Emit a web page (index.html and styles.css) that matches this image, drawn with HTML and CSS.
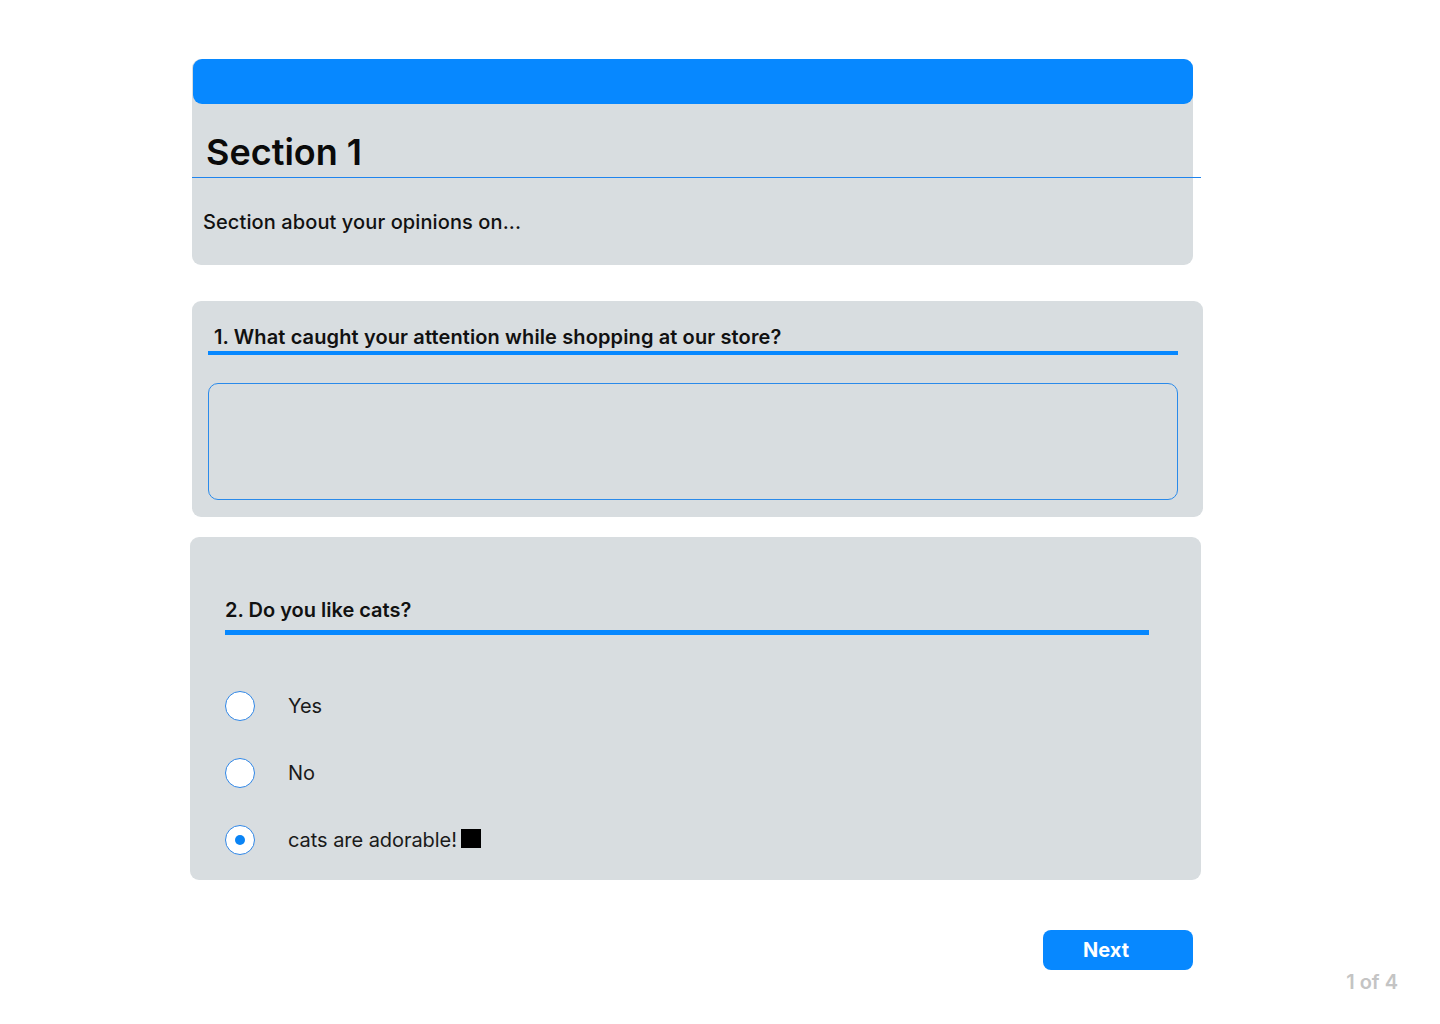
FILE: index.html
```html
<!DOCTYPE html>
<html lang="en">
<head>
<meta charset="utf-8">
<title>Survey - Section 1</title>
<link rel="stylesheet" href="styles.css">
</head>
<body>
<main class="page">
  <section class="card intro">
    <div class="intro-bar"></div>
    <h1 class="intro-title">Section 1</h1>
    <div class="intro-rule"></div>
    <p class="intro-desc">Section about your opinions on...</p>
  </section>

  <section class="card q-text">
    <h2 class="q-title q1-title">1. What caught your attention while shopping at our store?</h2>
    <textarea class="answer" aria-label="Answer"></textarea>
  </section>

  <section class="card q-choice">
    <h2 class="q-title q2-title">2. Do you like cats?</h2>
    <div class="options">
      <label class="option"><span class="radio"></span><span class="opt-label">Yes</span></label>
      <label class="option"><span class="radio"></span><span class="opt-label">No</span></label>
      <label class="option"><span class="radio checked"></span><span class="opt-label">cats are adorable!<span class="square"></span></span></label>
    </div>
  </section>

  <div class="actions">
    <button class="next-btn" type="button">Next</button>
  </div>
  <div class="pager">1 of 4</div>
</main>
</body>
</html>
```

FILE: styles.css
```css
* { box-sizing: border-box; }

html, body {
  margin: 0;
  padding: 0;
  background: #ffffff;
}

body {
  font-family: Inter, "Noto Sans", "Liberation Sans", sans-serif;
  color: #111111;
}

.page {
  width: 1440px;
  padding-top: 59px;
  display: flex;
  flex-direction: column;
}

.card {
  background: #d8dde0;
  border-radius: 9px;
}

/* Intro card */
.intro {
  margin-left: 192px;
  width: 1001px;
  padding-bottom: 31px;
  display: flex;
  flex-direction: column;
}

.intro-bar {
  height: 45px;
  background: #0788ff;
  border-radius: 9px;
  margin-left: 1px;
}

.intro-title {
  margin: 27px 0 0 14px;
  font-size: 36px;
  line-height: 43px;
  font-weight: 600;
  letter-spacing: 0;
  color: #0a0a0a;
}

.intro-rule {
  margin-top: 3px;
  margin-right: -8px;
  height: 1px;
  background: #1f84ee;
}

.intro-desc {
  margin: 32px 0 0 11px;
  font-size: 20px;
  line-height: 24px;
  font-weight: 500;
  letter-spacing: 0.1px;
  color: #111111;
}

/* Question titles */
.q-title {
  margin: 0;
  font-size: 20px;
  line-height: 24px;
  font-weight: 600;
  color: #111111;
}

/* Text question */
.q-text {
  margin-top: 36px;
  margin-left: 192px;
  width: 1011px;
  padding: 24px 25px 17px 16px;
  display: flex;
  flex-direction: column;
}

.q1-title {
  padding: 0 0 2px 6px;
  letter-spacing: 0.12px;
  border-bottom: 4px solid #0788ff;
}

.answer {
  margin-top: 28px;
  height: 117px;
  width: 100%;
  background: transparent;
  border: 1px solid #2a8aea;
  border-radius: 10px;
  resize: none;
  font-family: inherit;
  font-size: 18px;
  padding: 10px 12px;
}

/* Choice question */
.q-choice {
  margin-top: 20px;
  margin-left: 190px;
  width: 1011px;
  padding: 61px 52px 25px 35px;
  display: flex;
  flex-direction: column;
}

.q2-title {
  padding-bottom: 8px;
  border-bottom: 5px solid #0788ff;
}

.options {
  margin-top: 56px;
  display: flex;
  flex-direction: column;
  gap: 37px;
}

.option {
  display: flex;
  align-items: center;
  gap: 33px;
  height: 30px;
}

.radio {
  width: 30px;
  height: 30px;
  border-radius: 50%;
  border: 1px solid #2f86e6;
  background: #ffffff;
  display: flex;
  align-items: center;
  justify-content: center;
  flex: none;
}

.radio.checked::after {
  content: "";
  width: 10px;
  height: 10px;
  border-radius: 50%;
  background: #0a84f5;
}

.opt-label {
  font-size: 20px;
  line-height: 24px;
  font-weight: 400;
  color: #1a1a1a;
  letter-spacing: -0.05px;
  display: flex;
  align-items: center;
}

.square {
  display: inline-block;
  width: 20px;
  height: 19px;
  background: #000000;
  margin-left: 4px;
  margin-top: -3px;
}

/* Footer */
.actions {
  margin-top: 50px;
  padding-left: 1043px;
  display: flex;
}

.next-btn {
  width: 150px;
  height: 40px;
  border: none;
  border-radius: 8px;
  background: #0788ff;
  color: #ffffff;
  font-family: inherit;
  font-size: 20px;
  font-weight: 700;
  cursor: pointer;
  padding: 0 0 0 40px;
  text-align: left;
}

.pager {
  padding-right: 42px;
  text-align: right;
  font-size: 20px;
  line-height: 24px;
  font-weight: 600;
  color: #c4c4c4;
}
```
